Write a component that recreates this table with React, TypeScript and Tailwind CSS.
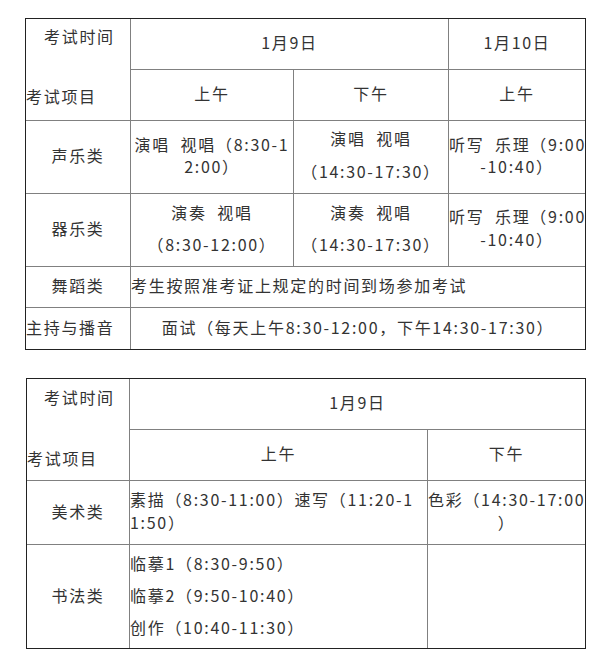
import React from "react";

const font = { fontFamily: '"Noto Sans CJK SC", "Noto Sans", sans-serif' };

function Cell({
  className = "",
  children,
}: {
  className?: string;
  children?: React.ReactNode;
}) {
  return (
    <div className={`bg-white flex items-center whitespace-nowrap pb-[4px] ${className}`}>
      {children}
    </div>
  );
}

function Lines({ items, leading, align = "center" }: { items: string[]; leading: string; align?: "center" | "left" }) {
  return (
    <div className={`${leading} ${align === "center" ? "text-center" : "text-left"} w-full`}>
      {items.map((t, i) => (
        <div key={i}>{t}</div>
      ))}
    </div>
  );
}

export default function App() {
  return (
    <div
      style={font}
      className="min-h-screen bg-white pt-[18px] pl-[25px] text-[16px] tracking-[1.7px] text-[#333]"
    >
      {/* 第一张表 */}
      <div className="w-[561px] border border-[#222] bg-[#808080] grid grid-cols-[104px_162px_154px_136px] grid-rows-[50px_50px_72px_72px_40px_41px] gap-px">
        <div className="bg-white row-span-2 flex flex-col pt-[6px] leading-[22px] whitespace-nowrap">
          <div className="pl-[18px]">考试时间</div>
          <div className="mt-[38px]">考试项目</div>
        </div>
        <Cell className="col-span-2 justify-center">1月9日</Cell>
        <Cell className="justify-center">1月10日</Cell>

        <Cell className="justify-center">上午</Cell>
        <Cell className="justify-center">下午</Cell>
        <Cell className="justify-center">上午</Cell>

        <Cell className="justify-center">声乐类</Cell>
        <Cell>
          <Lines leading="leading-[22px]" items={["演唱\u00a0\u00a0视唱（8:30-1", "2:00）"]} />
        </Cell>
        <Cell>
          <Lines leading="leading-[33px]" items={["演唱\u00a0\u00a0视唱", "（14:30-17:30）"]} />
        </Cell>
        <Cell>
          <Lines leading="leading-[22px]" items={["听写\u00a0\u00a0乐理（9:00", "-10:40）"]} />
        </Cell>

        <Cell className="justify-center">器乐类</Cell>
        <Cell>
          <Lines leading="leading-[32px]" items={["演奏\u00a0\u00a0视唱", "（8:30-12:00）"]} />
        </Cell>
        <Cell>
          <Lines leading="leading-[32px]" items={["演奏\u00a0\u00a0视唱", "（14:30-17:30）"]} />
        </Cell>
        <Cell>
          <Lines leading="leading-[23px]" items={["听写\u00a0\u00a0乐理（9:00", "-10:40）"]} />
        </Cell>

        <Cell className="justify-center">舞蹈类</Cell>
        <Cell className="col-span-3">考生按照准考证上规定的时间到场参加考试</Cell>

        <Cell>主持与播音</Cell>
        <Cell className="col-span-3 justify-center">
          面试（每天上午8:30-12:00，下午14:30-17:30）
        </Cell>
      </div>

      {/* 第二张表 */}
      <div className="mt-[28px] ml-px w-[560px] border border-[#222] bg-[#808080] grid grid-cols-[102px_297px_157px] grid-rows-[50px_50px_63px_103px] gap-px">
        <div className="bg-white row-span-2 flex flex-col pt-[7px] leading-[22px] whitespace-nowrap">
          <div className="pl-[17px]">考试时间</div>
          <div className="mt-[39px]">考试项目</div>
        </div>
        <Cell className="col-span-2 justify-center">1月9日</Cell>

        <Cell className="justify-center">上午</Cell>
        <Cell className="justify-center">下午</Cell>

        <Cell className="justify-center">美术类</Cell>
        <Cell>
          <Lines
            align="left"
            leading="leading-[23px]"
            items={["素描（8:30-11:00）速写（11:20-1", "1:50）"]}
          />
        </Cell>
        <Cell>
          <Lines leading="leading-[23px]" items={["色彩（14:30-17:00", "）"]} />
        </Cell>

        <Cell className="justify-center">书法类</Cell>
        <Cell>
          <Lines
            align="left"
            leading="leading-[32px]"
            items={["临摹1（8:30-9:50）", "临摹2（9:50-10:40）", "创作（10:40-11:30）"]}
          />
        </Cell>
        <Cell />
      </div>
    </div>
  );
}
